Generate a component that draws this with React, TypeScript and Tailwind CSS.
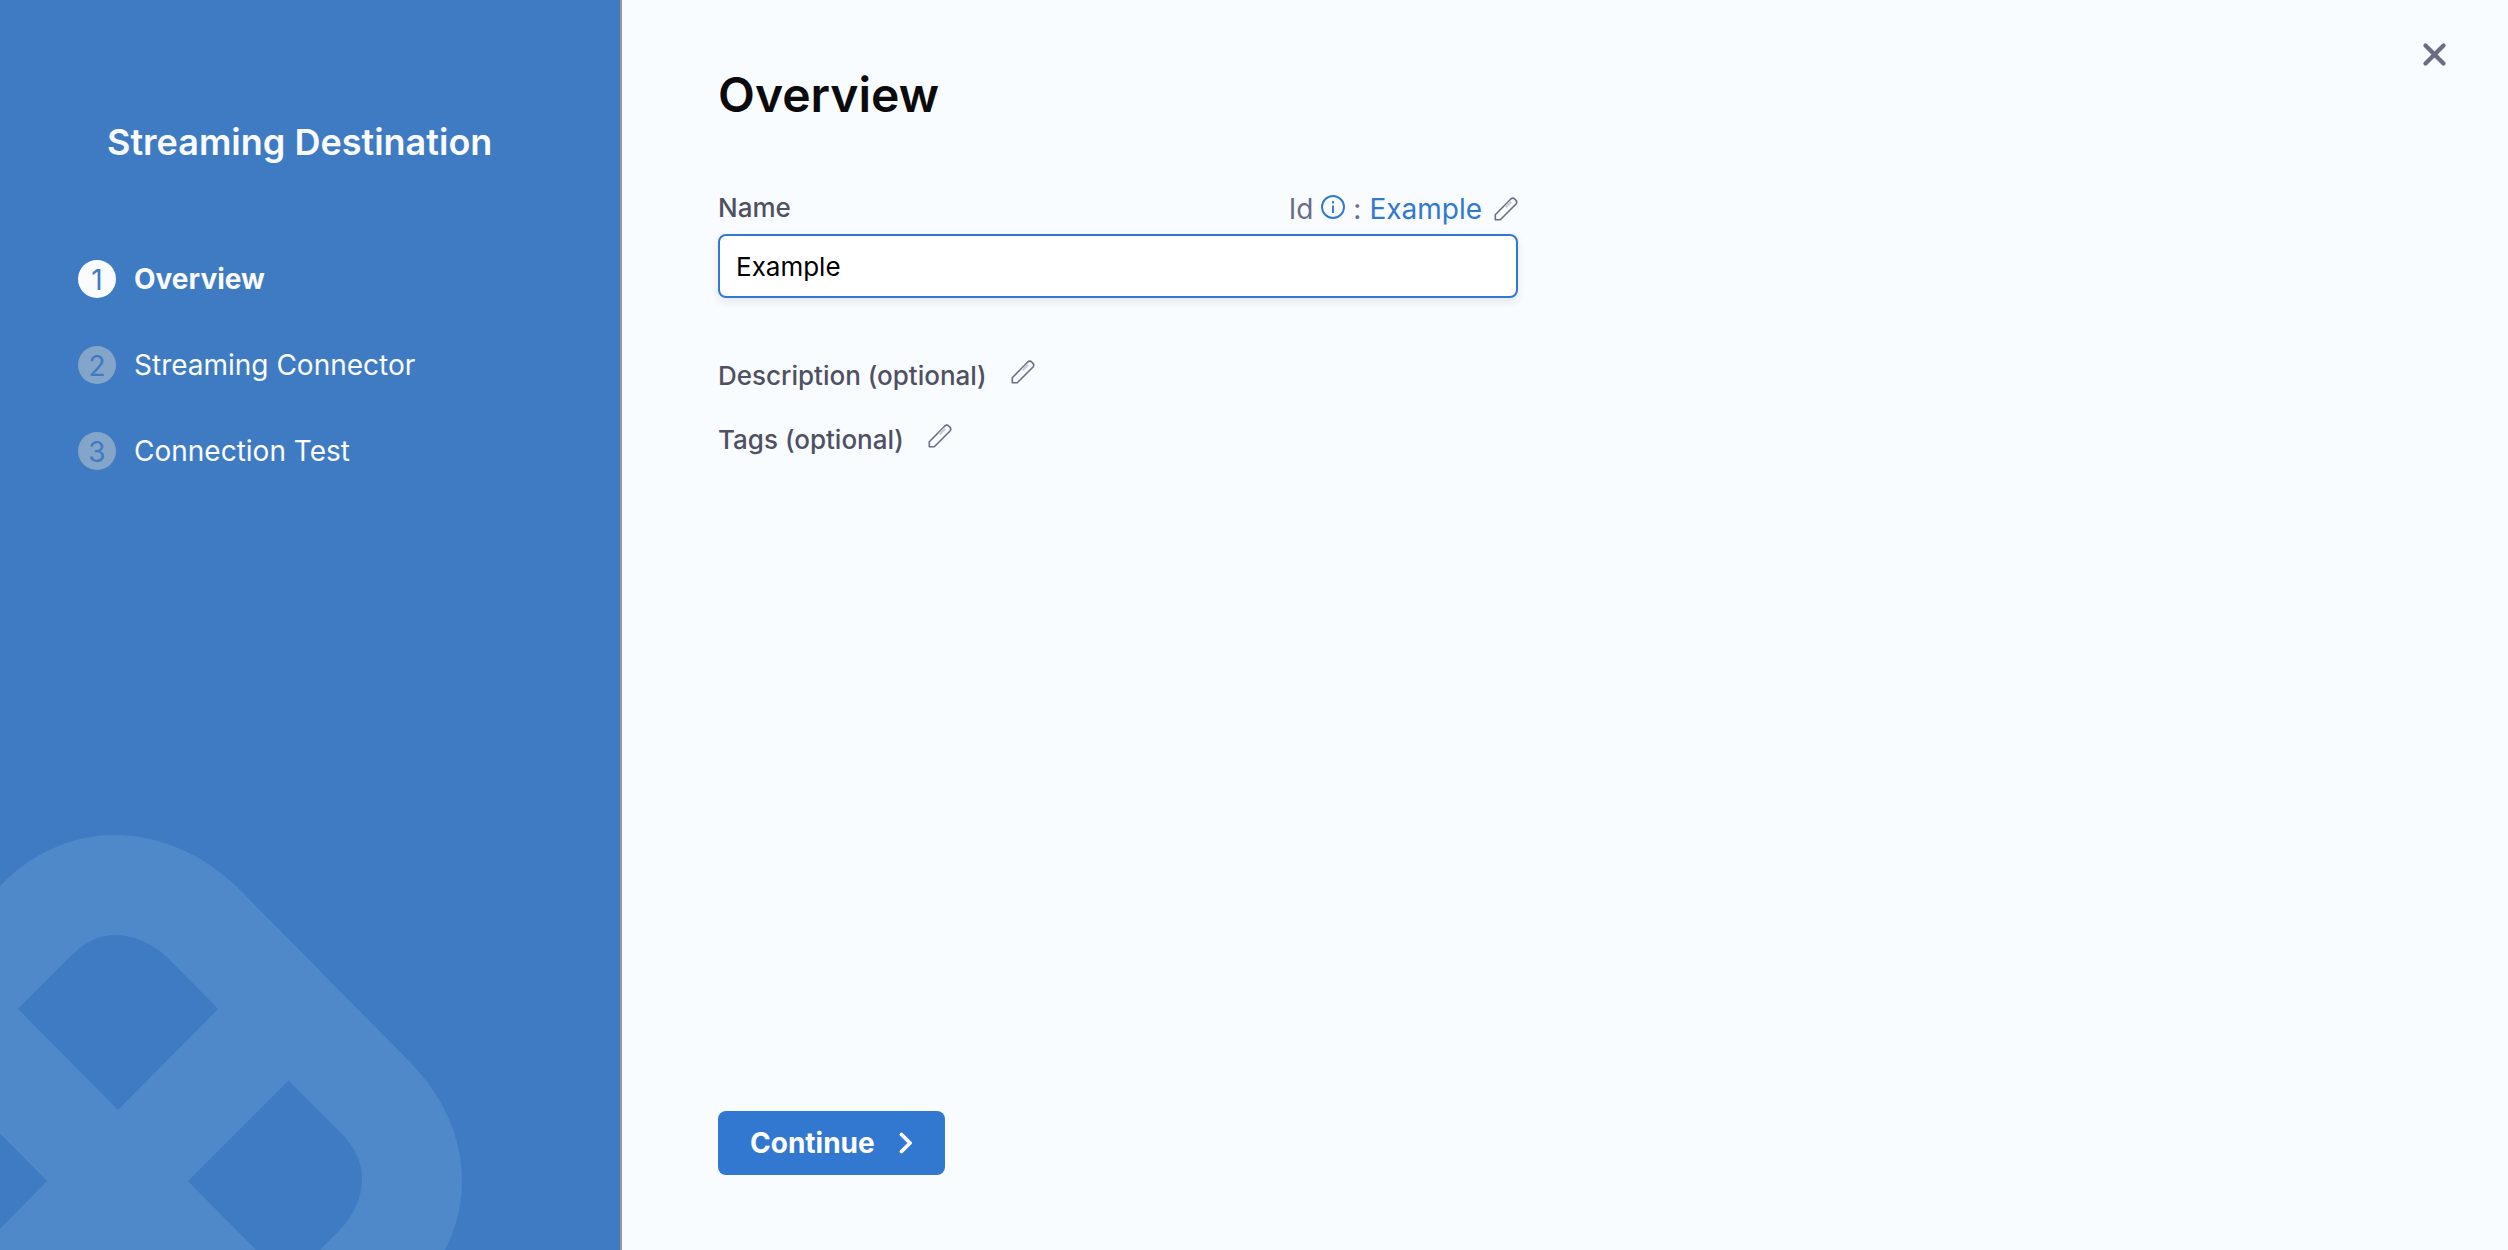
import React, { useState } from "react";

const steps = ["Overview", "Streaming Connector", "Connection Test"];

function Pencil() {
  return (
    <svg className="size-6" viewBox="0 0 24 24" fill="none" stroke="#6b6d85" strokeWidth="1.6" strokeLinejoin="round" aria-hidden="true">
      <path d="M1.300 22.700V17.700L16.600 2.200C18 .9 19.600.9 20.900 2.200L21.800 3.100C23 4.400 23 6 21.800 7.300L6.300 22.700Z" />
      <path d="M11.500 10L17 4.500" stroke="#cdced9" strokeWidth="2.800" />
    </svg>
  );
}

function Watermark() {
  return (
    <svg className="absolute bottom-0 left-0 h-[416px] w-[463px]" viewBox="0 834 463 416" aria-hidden="true">
      <path
        fill="#5089c9"
        fillRule="evenodd"
        d="M0 886C32 853 72 835 115 835C159 835 203 854 237 887L408 1060C443 1095 462 1137 462 1181C462 1205 456 1229 445 1250H320L339 1231C354 1215 362 1197 362 1179C362 1162 355 1147 341 1133L288.500 1080.500L188 1181L256 1250H0V1229L47 1181L0 1133.500ZM18 1009L118 1110L218 1009L168 958C152 943 133 935 115 935C100 935 86 941 73 954Z"
      />
    </svg>
  );
}

function OptionalField({ label }: { label: string }) {
  return (
    <div className="flex h-10 items-center gap-6 text-[26px] leading-10 font-medium text-[#4f5162]">
      <span>{label} (optional)</span>
      <button type="button" aria-label={`Edit ${label.toLowerCase()}`} className="mb-2">
        <Pencil />
      </button>
    </div>
  );
}

export default function App() {
  const [name, setName] = useState("Example");
  return (
    <div className="flex min-h-screen bg-[#f9fcff] font-['Inter',sans-serif]">
      <aside className="relative w-[622px] shrink-0 overflow-hidden border-r-2 border-[#999999] bg-[#3f7bc3] pt-[118px] text-[#fafbfc]">
        <Watermark />
        <h2 className="pl-[107px] text-4xl leading-12 font-semibold">Streaming Destination</h2>
        <ol className="mt-[94px] flex flex-col gap-12 pl-[78px]">
          {steps.map((step, i) => (
            <li key={step} className="flex h-[38px] items-center gap-[18px] text-[28px] leading-9">
              <span
                className={
                  i === 0
                    ? "flex size-[38px] items-center justify-center rounded-full bg-[#fafbfc] pt-0.5 text-[#3f7bc3]"
                    : "flex size-[38px] items-center justify-center rounded-full bg-[#83a5ca] pt-0.5 text-[#3f7bc3]"
                }
              >
                {i + 1}
              </span>
              <span className={i === 0 ? "font-bold" : ""}>{step}</span>
            </li>
          ))}
        </ol>
      </aside>

      <main className="relative flex grow flex-col items-start px-24 pt-16 pb-[75px]">
        <button type="button" aria-label="Close" className="absolute top-[42px] right-[61px]">
          <svg className="size-[25px]" viewBox="0 0 25 25" stroke="#6b6d85" strokeWidth="4.300" strokeLinecap="round" aria-hidden="true">
            <path d="M3.500 3.500L21.500 21.500M21.500 3.500L3.500 21.500" />
          </svg>
        </button>
        <h1 className="text-5xl leading-[62px] font-semibold text-[#0b0b0d]">Overview</h1>

        <form className="flex w-full max-w-[800px] grow flex-col items-start" onSubmit={(e) => e.preventDefault()}>
          <div className="mt-[62px] flex h-[46px] w-full items-start justify-between">
            <label htmlFor="name" className="text-[26px] leading-10 font-medium text-[#4f5162]">
              Name
            </label>
            <div className="flex items-center text-[28px] leading-[42px] text-[#6b6d85]">
              <span>Id</span>
              <svg className="mx-2 mb-1 size-6" viewBox="0 0 24 24" fill="none" stroke="#3278d0" strokeWidth="1.900" aria-hidden="true">
                <circle cx="12" cy="12" r="11" />
                <path d="M12 10.500V18M12 6V8.500" />
              </svg>
              <span>:</span>
              <span className="ml-2 text-[#3278d0]">{name}</span>
              <button type="button" aria-label="Edit id" className="ml-3">
                <Pencil />
              </button>
            </div>
          </div>
          <input
            id="name"
            value={name}
            onChange={(e) => setName(e.target.value)}
            className="h-16 w-full rounded-lg border-2 border-[#3278d0] bg-white px-4 text-[26px] text-black shadow-[0_4px_8px_rgba(40,41,61,0.10)] outline-none"
          />
          <div className="mt-[58px] flex flex-col gap-6">
            <OptionalField label="Description" />
            <OptionalField label="Tags" />
          </div>
          <button type="submit" className="mt-auto flex h-16 items-center gap-6 rounded-lg bg-[#3278d0] px-8 text-[28px] font-bold text-white">
            Continue
            <svg className="h-[22px] w-[14px]" viewBox="0 0 14 22" fill="none" stroke="currentColor" strokeWidth="3.800" strokeLinecap="round" strokeLinejoin="round" aria-hidden="true">
              <path d="M2.500 2.500L11 11L2.500 19.500" />
            </svg>
          </button>
        </form>
      </main>
    </div>
  );
}
